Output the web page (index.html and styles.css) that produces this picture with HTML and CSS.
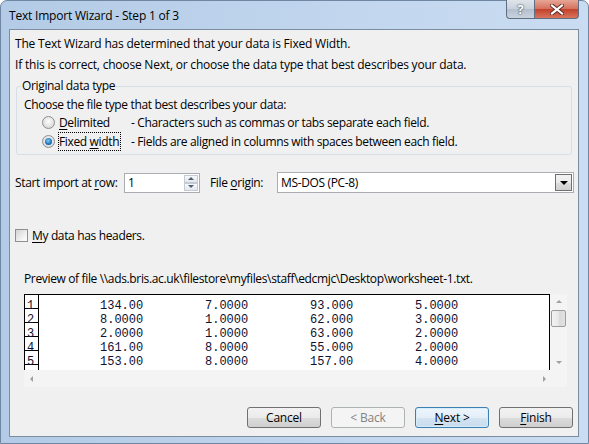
FILE: index.html
```html
<!DOCTYPE html>
<html lang="en">
<head>
    <meta charset="UTF-8">
    <title>Text Import Wizard - Step 1 of 3</title>
    <link rel="stylesheet" href="styles.css">
</head>
<body>

<div class="window">
	<div class="titlebar">
		<span class="title">Text Import Wizard - Step 1 of 3</span>
		<div class="caption-btns">
			<div class="cap-btn help">?</div>
			<div class="cap-btn close">
				<svg width="14" height="11" viewBox="0 0 14 11">
					<path d="M2 1.5 L12 9.5 M12 1.5 L2 9.5" stroke="#5a2a22" stroke-width="4" stroke-linecap="square"/>
					<path d="M2 1.5 L12 9.5 M12 1.5 L2 9.5" stroke="#ffffff" stroke-width="2.2" stroke-linecap="square"/>
				</svg>
			</div>
		</div>
	</div>

	<div class="client">
		<p class="intro intro-first">The Text Wizard has determined that your data is Fixed Width.</p>
		<p class="intro">If this is correct, choose Next, or choose the data type that best describes your data.</p>

		<div class="group">
			<span class="legend">Original data type</span>
			<p class="group-hint">Choose the file type that best describes your data:</p>
			<div class="radio-row">
				<span class="radio"></span>
				<span class="radio-label"><u>D</u>elimited</span>
				<span class="radio-desc">- Characters such as commas or tabs separate each field.</span>
			</div>
			<div class="radio-row">
				<span class="radio checked"></span>
				<span class="radio-label"><span class="focus">Fixed <u>w</u>idth</span></span>
				<span class="radio-desc">- Fields are aligned in columns with spaces between each field.</span>
			</div>
		</div>

		<div class="import-row">
			<span class="import-label">Start import at <u>r</u>ow:</span>
			<div class="spinbox">
				<span class="spin-value">1</span>
				<div class="spin-btns">
					<span class="spin-btn"><span class="arrow-up"></span></span>
					<span class="spin-btn"><span class="arrow-down"></span></span>
				</div>
			</div>
			<span class="origin-label">File <u>o</u>rigin:</span>
			<div class="dropdown">
				<span class="dropdown-value">MS-DOS (PC-8)</span>
				<span class="dropdown-btn"><span class="arrow-down dark"></span></span>
			</div>
		</div>

		<div class="check-row">
			<span class="checkbox"></span>
			<span class="check-label"><u>M</u>y data has headers.</span>
		</div>

		<p class="preview-label">Preview of file \\ads.bris.ac.uk\filestore\myfiles\staff\edcmjc\Desktop\worksheet-1.txt.</p>

		<div class="preview">
			<div class="preview-data">
				<div class="data-row"><span class="row-num">1</span><span class="cell first">134.00</span><span class="cell">7.0000</span><span class="cell">93.000</span><span class="cell">5.0000</span></div>
				<div class="data-row"><span class="row-num">2</span><span class="cell first">8.0000</span><span class="cell">1.0000</span><span class="cell">62.000</span><span class="cell">3.0000</span></div>
				<div class="data-row"><span class="row-num">3</span><span class="cell first">2.0000</span><span class="cell">1.0000</span><span class="cell">63.000</span><span class="cell">2.0000</span></div>
				<div class="data-row"><span class="row-num">4</span><span class="cell first">161.00</span><span class="cell">8.0000</span><span class="cell">55.000</span><span class="cell">2.0000</span></div>
				<div class="data-row"><span class="row-num">5</span><span class="cell first">153.00</span><span class="cell">8.0000</span><span class="cell">157.00</span><span class="cell">4.0000</span></div>
				<div class="data-row"><span class="row-num"></span></div>
			</div>
			<div class="vscroll">
				<span class="arrow-up"></span>
				<span class="thumb"></span>
				<span class="arrow-down"></span>
			</div>
			<div class="hscroll">
				<span class="arrow-left"></span>
				<span class="arrow-right"></span>
			</div>
			<div class="corner"></div>
		</div>

		<div class="buttons">
			<button class="btn">Cancel</button>
			<button class="btn" disabled>&lt; Back</button>
			<button class="btn default"><u>N</u>ext &gt;</button>
			<button class="btn"><u>F</u>inish</button>
		</div>
	</div>
</div>

</body>
</html>
```

FILE: styles.css
```css
*{
	padding: 0;
	margin: 0;
	box-sizing: border-box;
}

body{
	font-family: "Open Sans", "Noto Sans", sans-serif;
	font-size: 12px;
	letter-spacing: -0.35px;
	color: #000;
	background-color: #fff;
}

u{
	text-decoration: underline;
	text-underline-offset: 2px;
}

.window{
	width: 589px;
	height: 444px;
	display: flex;
	flex-direction: column;
	padding: 0 9px 6px 8px;
	background: linear-gradient(to right, #b3cbe6, #c2d6ee 60%, #c9dcf1);
	border: 1px solid #6f87a3;
	border-radius: 7px 7px 0 0;
}

.titlebar{
	height: 28px;
	display: flex;
	justify-content: space-between;
	align-items: flex-start;
}

.title{
	margin-top: 6px;
	font-size: 12px;
	letter-spacing: -0.2px;
	color: #000;
}

.caption-btns{
	display: flex;
	margin-top: -1px;
}

.cap-btn{
	height: 19px;
	display: flex;
	justify-content: center;
	align-items: center;
	border: 1px solid #5d6f85;
	border-top: none;
}

.help{
	width: 28px;
	border-radius: 0 0 0 4px;
	border-right: none;
	background: linear-gradient(#dfe4ea, #c9d1da 50%, #b3bfcc 51%, #c9d3de);
	color: #fff;
	font-weight: bold;
	font-size: 13px;
	text-shadow: 0 0 2px #30455e, 0 0 1px #30455e;
}

.close{
	width: 45px;
	border-radius: 0 0 4px 0;
	background: linear-gradient(#e7a596, #d5705d 50%, #c2412a 51%, #d9745c);
}

.client{
	flex: 1;
	background-color: #f0f0f0;
	border: 1px solid #7d8da0;
	display: flex;
	flex-direction: column;
}

.intro{
	line-height: 16px;
	margin: 5px 0 0 5px;
	letter-spacing: -0.2px;
}

.intro-first{
	margin-top: 6px;
}

.group{
	position: relative;
	margin: 13px 6px 0 6px;
	padding: 10px 0 3px 7px;
	border: 1px solid #d5dfe5;
	border-radius: 3px;
}

.legend{
	position: absolute;
	top: -9px;
	left: 4px;
	padding: 0 1px;
	line-height: 16px;
	background-color: #f0f0f0;
}

.group-hint{
	line-height: 16px;
}

.radio-row{
	display: flex;
	align-items: center;
	height: 19px;
	padding-left: 18px;
}

.radio{
	width: 13px;
	height: 13px;
	border-radius: 50%;
	border: 1px solid #8e8f8f;
	background: radial-gradient(circle at 50% 40%, #fefefe, #dcdcdc 70%, #c8c8c8);
	margin-right: 4px;
	position: relative;
}

.radio.checked::after{
	content: "";
	position: absolute;
	left: 2px;
	top: 2px;
	width: 7px;
	height: 7px;
	border-radius: 50%;
	background: radial-gradient(circle at 45% 40%, #7fd0f5, #1b6fb6 60%, #0d3f7a);
}

.radio-label{
	width: 72px;
	line-height: 16px;
}

.focus{
	outline: 1px dotted #000;
	outline-offset: 0;
	padding: 0 1px 0 0;
}

.import-row{
	display: flex;
	align-items: center;
	height: 21px;
	margin: 17px 4px 0 5px;
	white-space: nowrap;
}

.import-label{
	width: 109px;
}

.spinbox{
	width: 76px;
	height: 20px;
	display: flex;
	justify-content: space-between;
	background-color: #fff;
	border: 1px solid #abadb3;
}

.spin-value{
	padding-left: 3px;
	line-height: 18px;
}

.spin-btns{
	width: 15px;
	display: flex;
	flex-direction: column;
	padding: 1px 1px 1px 0;
}

.spin-btn{
	flex: 1;
	display: flex;
	justify-content: center;
	align-items: center;
	border: 1px solid #c5cbd3;
	background: linear-gradient(#f8f9fa, #e3e7ec);
}

.arrow-up{
	width: 0;
	height: 0;
	border-left: 3px solid transparent;
	border-right: 3px solid transparent;
	border-bottom: 3px solid #4c607a;
}

.arrow-down{
	width: 0;
	height: 0;
	border-left: 3px solid transparent;
	border-right: 3px solid transparent;
	border-top: 3px solid #4c607a;
}

.arrow-down.dark{
	border-left-width: 4px;
	border-right-width: 4px;
	border-top: 4px solid #000;
}

.arrow-left{
	width: 0;
	height: 0;
	border-top: 3px solid transparent;
	border-bottom: 3px solid transparent;
	border-right: 3px solid #a0a0a0;
}

.arrow-right{
	width: 0;
	height: 0;
	border-top: 3px solid transparent;
	border-bottom: 3px solid transparent;
	border-left: 3px solid #a0a0a0;
}

.origin-label{
	width: 67px;
	margin-left: 10px;
}

.dropdown{
	flex: 1;
	height: 21px;
	display: flex;
	justify-content: space-between;
	align-items: center;
	background-color: #fff;
	border: 1px solid #abadb3;
	padding: 0 1px 0 3px;
}

.dropdown-btn{
	width: 17px;
	height: 17px;
	display: flex;
	justify-content: center;
	align-items: center;
	border: 1px solid #707070;
	background: linear-gradient(#f2f2f2, #ebebeb 50%, #dddddd 51%, #cfcfcf);
}

.check-row{
	display: flex;
	align-items: center;
	height: 13px;
	margin: 36px 0 0 5px;
}

.checkbox{
	width: 13px;
	height: 13px;
	border: 1px solid #8e8f8f;
	background: linear-gradient(135deg, #d3d3d3, #f4f4f4 70%, #fbfbfb);
	margin-right: 4px;
}

.preview-label{
	line-height: 16px;
	margin: 29px 0 0 14px;
}

.preview{
	display: grid;
	grid-template-columns: 526px 17px;
	grid-template-rows: 76px 17px;
	margin: 7px 0 0 14px;
	background-color: #f4f4f4;
	width: 543px;
}

.preview-data{
	background-color: #fff;
	border: 1px solid #000;
	border-bottom: none;
	overflow: hidden;
	font-family: "Liberation Mono", monospace;
	font-size: 12px;
	letter-spacing: 0;
	color: #101030;
}

.data-row{
	display: flex;
	height: 14px;
	line-height: 14px;
}

.row-num,
.cell{
	padding-top: 4px;
}

.row-num{
	width: 14px;
	padding-left: 2px;
	border-right: 1px solid #000;
	border-bottom: 1px solid #000;
}

.cell{
	width: 105px;
}

.cell.first{
	margin-left: 61px;
}

.vscroll{
	display: flex;
	flex-direction: column;
	align-items: center;
	padding: 6px 0 6px 0;
}

.vscroll .arrow-up,
.vscroll .arrow-down{
	border-bottom-color: #a0a0a0;
	border-top-color: #a0a0a0;
}

.vscroll .thumb{
	width: 15px;
	height: 17px;
	margin: 7px 0 auto 0;
	border: 1px solid #9b9b9b;
	border-radius: 2px;
	background: linear-gradient(to right, #f3f3f3, #e8e8e8 50%, #d9d9d9 51%, #e2e2e2);
}

.hscroll{
	display: flex;
	justify-content: space-between;
	align-items: center;
	padding: 0 4px 0 6px;
}

.buttons{
	display: flex;
	justify-content: flex-end;
	gap: 10px;
	margin: 20px 5px 0 0;
}

.btn{
	width: 74px;
	height: 21px;
	font-family: "Open Sans", "Noto Sans", sans-serif;
	font-size: 12px;
	letter-spacing: -0.2px;
	color: #000;
	border: 1px solid #707070;
	border-radius: 3px;
	background: linear-gradient(#f2f2f2, #ebebeb 50%, #dddddd 51%, #cfcfcf);
}

.btn:disabled{
	color: #838383;
	border-color: #adb2b5;
	background: #f4f4f4;
}

.btn.default{
	border-color: #3c7fb1;
	box-shadow: inset 0 0 0 1px #d6ecfa;
	background: linear-gradient(#eef6fc, #e3eef8 50%, #d3e3f1 51%, #cadced);
}
```
